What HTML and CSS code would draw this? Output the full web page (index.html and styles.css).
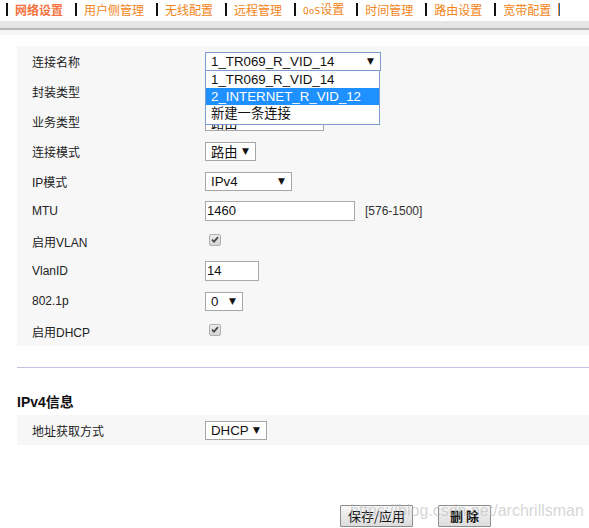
FILE: index.html
```html
<!DOCTYPE html>
<html lang="zh-CN">
<head>
<meta charset="utf-8">
<title>网络设置</title>
<link rel="stylesheet" href="styles.css">
</head>
<body>
<nav class="nav">
  <span class="sep"></span><a class="nav-item active">网络设置</a>
  <span class="sep"></span><a class="nav-item">用户侧管理</a>
  <span class="sep"></span><a class="nav-item">无线配置</a>
  <span class="sep"></span><a class="nav-item">远程管理</a>
  <span class="sep"></span><a class="nav-item"><span class="qos">QoS</span>设置</a>
  <span class="sep"></span><a class="nav-item">时间管理</a>
  <span class="sep"></span><a class="nav-item">路由设置</a>
  <span class="sep"></span><a class="nav-item nav-item-last">宽带配置</a>
  <span class="sep sep-last"></span>
</nav>
<div class="band"></div>

<main class="main">
  <section class="panel">
    <div class="row">
      <label class="label">连接名称</label>
      <div class="ctrl">
        <div class="select-wrap">
          <div class="select select-open w-conn"><span>1_TR069_R_VID_14</span><span class="arrow">▼</span></div>
          <ul class="dropdown">
            <li class="opt">1_TR069_R_VID_14</li>
            <li class="opt opt-hl">2_INTERNET_R_VID_12</li>
            <li class="opt">新建一条连接</li>
          </ul>
        </div>
      </div>
    </div>
    <div class="row">
      <label class="label">封装类型</label>
      <div class="ctrl"><div class="select w-type"></div></div>
    </div>
    <div class="row">
      <label class="label">业务类型</label>
      <div class="ctrl"><div class="select w-type"><span class="peek">路由</span></div></div>
    </div>
    <div class="row">
      <label class="label">连接模式</label>
      <div class="ctrl"><div class="select w-mode"><span>路由</span><span class="arrow">▼</span></div></div>
    </div>
    <div class="row">
      <label class="label">IP模式</label>
      <div class="ctrl"><div class="select w-ip"><span>IPv4</span><span class="arrow">▼</span></div></div>
    </div>
    <div class="row">
      <label class="label">MTU</label>
      <div class="ctrl"><div class="input w-mtu">1460</div><span class="hint">[576-1500]</span></div>
    </div>
    <div class="row">
      <label class="label">启用VLAN</label>
      <div class="ctrl"><span class="checkbox"><svg viewBox="0 0 11 11" width="11" height="11"><path d="M2.2 5.6 L4.4 7.8 L8.8 2.8" fill="none" stroke="#4a4a4a" stroke-width="2"/></svg></span></div>
    </div>
    <div class="row">
      <label class="label">VlanID</label>
      <div class="ctrl"><div class="input w-vlan">14</div></div>
    </div>
    <div class="row">
      <label class="label">802.1p</label>
      <div class="ctrl"><div class="select w-prio"><span>0</span><span class="arrow">▼</span></div></div>
    </div>
    <div class="row">
      <label class="label">启用DHCP</label>
      <div class="ctrl"><span class="checkbox"><svg viewBox="0 0 11 11" width="11" height="11"><path d="M2.2 5.6 L4.4 7.8 L8.8 2.8" fill="none" stroke="#4a4a4a" stroke-width="2"/></svg></span></div>
    </div>
  </section>

  <div class="divider"></div>

  <h3 class="section-title">IPv4信息</h3>
  <section class="panel">
    <div class="row">
      <label class="label">地址获取方式</label>
      <div class="ctrl"><div class="select w-dhcp"><span>DHCP</span><span class="arrow">▼</span></div></div>
    </div>
  </section>

  <div class="actions">
    <button class="btn btn-save">保存/应用</button>
    <button class="btn btn-del">删 除</button>
    <span class="watermark">https://blog.csdn.net/archrillsman</span>
  </div>
</main>
</body>
</html>
```

FILE: styles.css
```css
* { box-sizing: border-box; }

html, body {
  margin: 0;
  padding: 0;
  background: #ffffff;
}

body {
  width: 589px;
  overflow: hidden;
  font-family: "Liberation Sans", "Noto Sans CJK SC", sans-serif;
  font-size: 12px;
  color: #222;
}

/* ---------- top navigation ---------- */
.nav {
  display: flex;
  align-items: center;
  height: 21px;
  padding-left: 6px;
  white-space: nowrap;
}

.sep {
  display: inline-block;
  width: 2px;
  height: 13px;
  background: #111;
  margin-top: -2px;
}

.sep-last {
  background: #2d6aa8;
  border-left: 1px solid #f08a30;
  width: 2px;
}

.nav-item {
  font-family: "Noto Sans CJK SC", sans-serif;
  font-size: 12px;
  line-height: 16px;
  color: #f28418;
  padding: 0 12px 0 7px;
  margin-top: -2px;
}

.nav-item-last {
  padding-right: 7px;
}

.nav-item.active {
  color: #f5723f;
  font-weight: bold;
}

.qos {
  font-family: "DejaVu Sans Mono", monospace;
  font-size: 9.5px;
}

.band {
  height: 14px;
  background: linear-gradient(to bottom,
    #e7e7e7 0, #e4e4e4 7px,
    #b6b6b6 7px, #b6b6b6 9px,
    #f5f5f5 9px, #f6f6f6 14px);
}

/* ---------- main ---------- */
.main {
  padding-left: 17px;
}

.panel {
  background: #f7f7f7;
  margin-top: 11px;
}

.row {
  display: grid;
  grid-template-columns: 173px 1fr;
  align-items: center;
  height: 30px;
  padding-left: 15px;
}

.label {
  font-size: 12px;
  color: #222;
  white-space: nowrap;
}

.ctrl {
  display: flex;
  align-items: center;
}

.select-wrap {
  position: relative;
}

.select {
  display: flex;
  align-items: center;
  justify-content: space-between;
  height: 19px;
  border: 1px solid #a6a6a6;
  background: #fff;
  font-family: "Liberation Sans", "Noto Sans CJK SC", sans-serif;
  font-size: 13.3px;
  color: #111;
  padding: 0 6px 0 5px;
  white-space: nowrap;
}

.select-open {
  border-color: #7c9bd0;
}

.arrow {
  font-family: "DejaVu Sans", sans-serif;
  font-size: 9px;
  color: #111;
}

.peek {
  margin-top: 3px;
}

.w-conn { width: 176px; }
.w-type { width: 119px; }
.w-mode { width: 51px; }
.w-ip   { width: 87px; }
.w-prio { width: 38px; }
.w-dhcp { width: 62px; }

.dropdown {
  position: absolute;
  z-index: 5;
  top: 19px;
  left: 0;
  width: 175px;
  margin: 0;
  padding: 0 0 2px 0;
  list-style: none;
  background: #fff;
  border: 1px solid #7c9bd0;
  border-top: none;
}

.opt {
  height: 17px;
  line-height: 17px;
  padding-left: 5px;
  font-family: "Liberation Sans", "Noto Sans CJK SC", sans-serif;
  font-size: 13.3px;
  color: #111;
  white-space: nowrap;
}

.opt-hl {
  background: #1e90ff;
  color: #fff;
}

.input {
  height: 20px;
  border: 1px solid #a9a9a9;
  background: #fff;
  font-family: "Liberation Sans", sans-serif;
  font-size: 13px;
  line-height: 18px;
  padding-left: 1px;
  color: #111;
}

.w-mtu  { width: 150px; }
.w-vlan { width: 54px; }

.hint {
  margin-left: 10px;
  font-size: 12px;
  color: #333;
}

.checkbox {
  display: inline-flex;
  align-items: center;
  justify-content: center;
  width: 12px;
  height: 12px;
  margin-left: 4px;
  margin-top: -3px;
  border: 1px solid #b0b0b0;
  border-radius: 2px;
  background: linear-gradient(#ececec, #d4d4d4);
}

.divider {
  height: 1px;
  background: #c2c2e2;
  margin-top: 21px;
}

.section-title {
  margin: 24px 0 0 0;
  font-family: "Liberation Sans", "Noto Sans CJK SC", sans-serif;
  font-size: 14px;
  font-weight: bold;
  line-height: 20px;
  color: #111;
}

.section-title + .panel {
  margin-top: 3px;
}

/* ---------- actions ---------- */
.actions {
  position: relative;
  display: flex;
  gap: 25px;
  margin-top: 60px;
  padding-left: 323px;
}

.btn {
  height: 22px;
  border: 1px solid #8c8c8c;
  border-radius: 1px;
  background: linear-gradient(#f7f7f7, #dcdcdc);
  font-family: "Noto Sans CJK SC", sans-serif;
  font-size: 13px;
  line-height: 18px;
  color: #111;
  padding: 0;
}

.btn-save { width: 73px; }
.btn-del  { width: 53px; font-weight: bold; }

.watermark {
  position: absolute;
  left: 333px;
  top: -3px;
  font-family: "Liberation Sans", sans-serif;
  font-size: 16px;
  color: rgba(185, 185, 185, 0.6);
  white-space: nowrap;
  pointer-events: none;
}
```
